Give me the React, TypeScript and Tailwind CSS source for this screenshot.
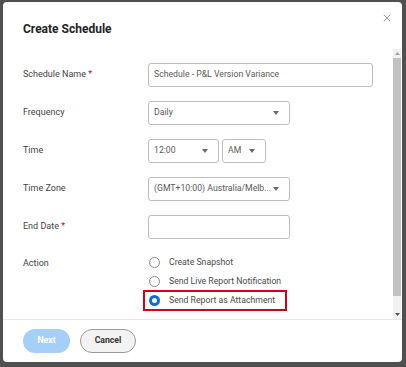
import { X } from 'lucide-react';

const FONT = { fontFamily: 'Roboto, "Liberation Sans", sans-serif' };

function Caret() {
  return (
    <svg width="6" height="4" viewBox="0 0 6 4" className="shrink-0">
      <path d="M0 0h6L3 4z" fill="#6b6b6b" />
    </svg>
  );
}

function Row({ label, required, children }: { label: string; required?: boolean; children: React.ReactNode }) {
  return (
    <div className="flex h-[24px] items-center">
      <div className="w-[125px] text-[9px] text-[#444]">
        {label}
        {required && <span className="text-[#d0021b]"> *</span>}
      </div>
      {children}
    </div>
  );
}

function Select({ value, className }: { value: string; className: string }) {
  return (
    <div
      className={`flex h-[24px] items-center justify-between rounded-[3px] border border-[#bdbdbd] pl-[5px] pr-[10px] text-[8.7px] text-[#5a5a5a] ${className}`}
    >
      <span className="truncate">{value}</span>
      <Caret />
    </div>
  );
}

function Radio({ label, checked }: { label: string; checked?: boolean }) {
  return (
    <div className="flex h-[19px] items-center gap-[9px] pl-[6px]">
      {checked ? (
        <span className="h-[11px] w-[11px] rounded-full border-[3px] border-[#0b6fcf] bg-white" />
      ) : (
        <span className="h-[11px] w-[11px] rounded-full border border-[#8a8a8a] bg-white" />
      )}
      <span className="text-[8.7px] text-[#4a4a4a]">{label}</span>
    </div>
  );
}

export default function App() {
  return (
    <div className="h-[367px] w-[406px] bg-[#505050] pb-[5px] pl-[3px] pr-[4px] pt-[2px]" style={FONT}>
      <div className="flex h-full flex-col overflow-hidden rounded-[4px] bg-white">
        <div className="relative flex h-[47px] shrink-0 items-center pl-[20px] pt-[6px]">
          <h1 className="text-[12px] font-bold text-[#222]">Create Schedule</h1>
          <X className="absolute right-[9px] top-[10px] text-[#777]" size={12} strokeWidth={1.5} />
        </div>

        <div className="flex h-[271px] shrink-0 border-b border-[#e6e6e6]">
          <div className="flex flex-1 flex-col gap-[14px] pl-[20px] pt-[14px]">
            <Row label="Schedule Name" required>
              <div className="flex h-[24px] w-[225px] items-center rounded-[3px] border border-[#bdbdbd] px-[5px] text-[8.7px] text-[#5a5a5a]">
                Schedule - P&amp;L Version Variance
              </div>
            </Row>
            <Row label="Frequency">
              <Select value="Daily" className="w-[142px]" />
            </Row>
            <Row label="Time">
              <div className="flex gap-[3px]">
                <Select value="12:00" className="w-[71px]" />
                <Select value="AM" className="w-[44px]" />
              </div>
            </Row>
            <Row label="Time Zone">
              <Select value="(GMT+10:00) Australia/Melb..." className="w-[142px]" />
            </Row>
            <Row label="End Date" required>
              <div className="h-[24px] w-[142px] rounded-[3px] border border-[#bdbdbd]" />
            </Row>
            <div className="flex">
              <div className="flex h-[21px] w-[120px] items-center text-[9px] text-[#444]">Action</div>
              <div className="flex flex-col">
                <Radio label="Create Snapshot" />
                <Radio label="Send Live Report Notification" />
                <div className="-mt-[1px] w-[144px] border-2 border-[#d0021b] [&>div]:h-[17px] [&>div]:pl-[4px]">
                  <Radio label="Send Report as Attachment" checked />
                </div>
              </div>
            </div>
          </div>
          <div className="mr-[1px] flex w-[8px] flex-col bg-[#f1f1f1]">
            <div className="flex h-[9px] items-center justify-center">
              <svg width="5" height="3" viewBox="0 0 5 3"><path d="M0 3h5L2.5 0z" fill="#a3a3a3" /></svg>
            </div>
            <div className="h-[238px] bg-[#c1c1c1]" />
            <div className="flex-1" />
            <div className="flex h-[9px] items-center justify-center">
              <svg width="5" height="3" viewBox="0 0 5 3"><path d="M0 0h5L2.5 3z" fill="#505050" /></svg>
            </div>
          </div>
        </div>

        <div className="flex flex-1 items-start gap-[10px] pl-[20px] pt-[9px]">
          <button className="h-[24px] w-[47px] rounded-full bg-[#a6cff7] text-[8.7px] font-bold text-white">Next</button>
          <button className="h-[24px] w-[56px] rounded-full border border-[#9a9a9a] bg-[#f3f3f3] text-[8.7px] font-bold text-[#333]">
            Cancel
          </button>
        </div>
      </div>
    </div>
  );
}
